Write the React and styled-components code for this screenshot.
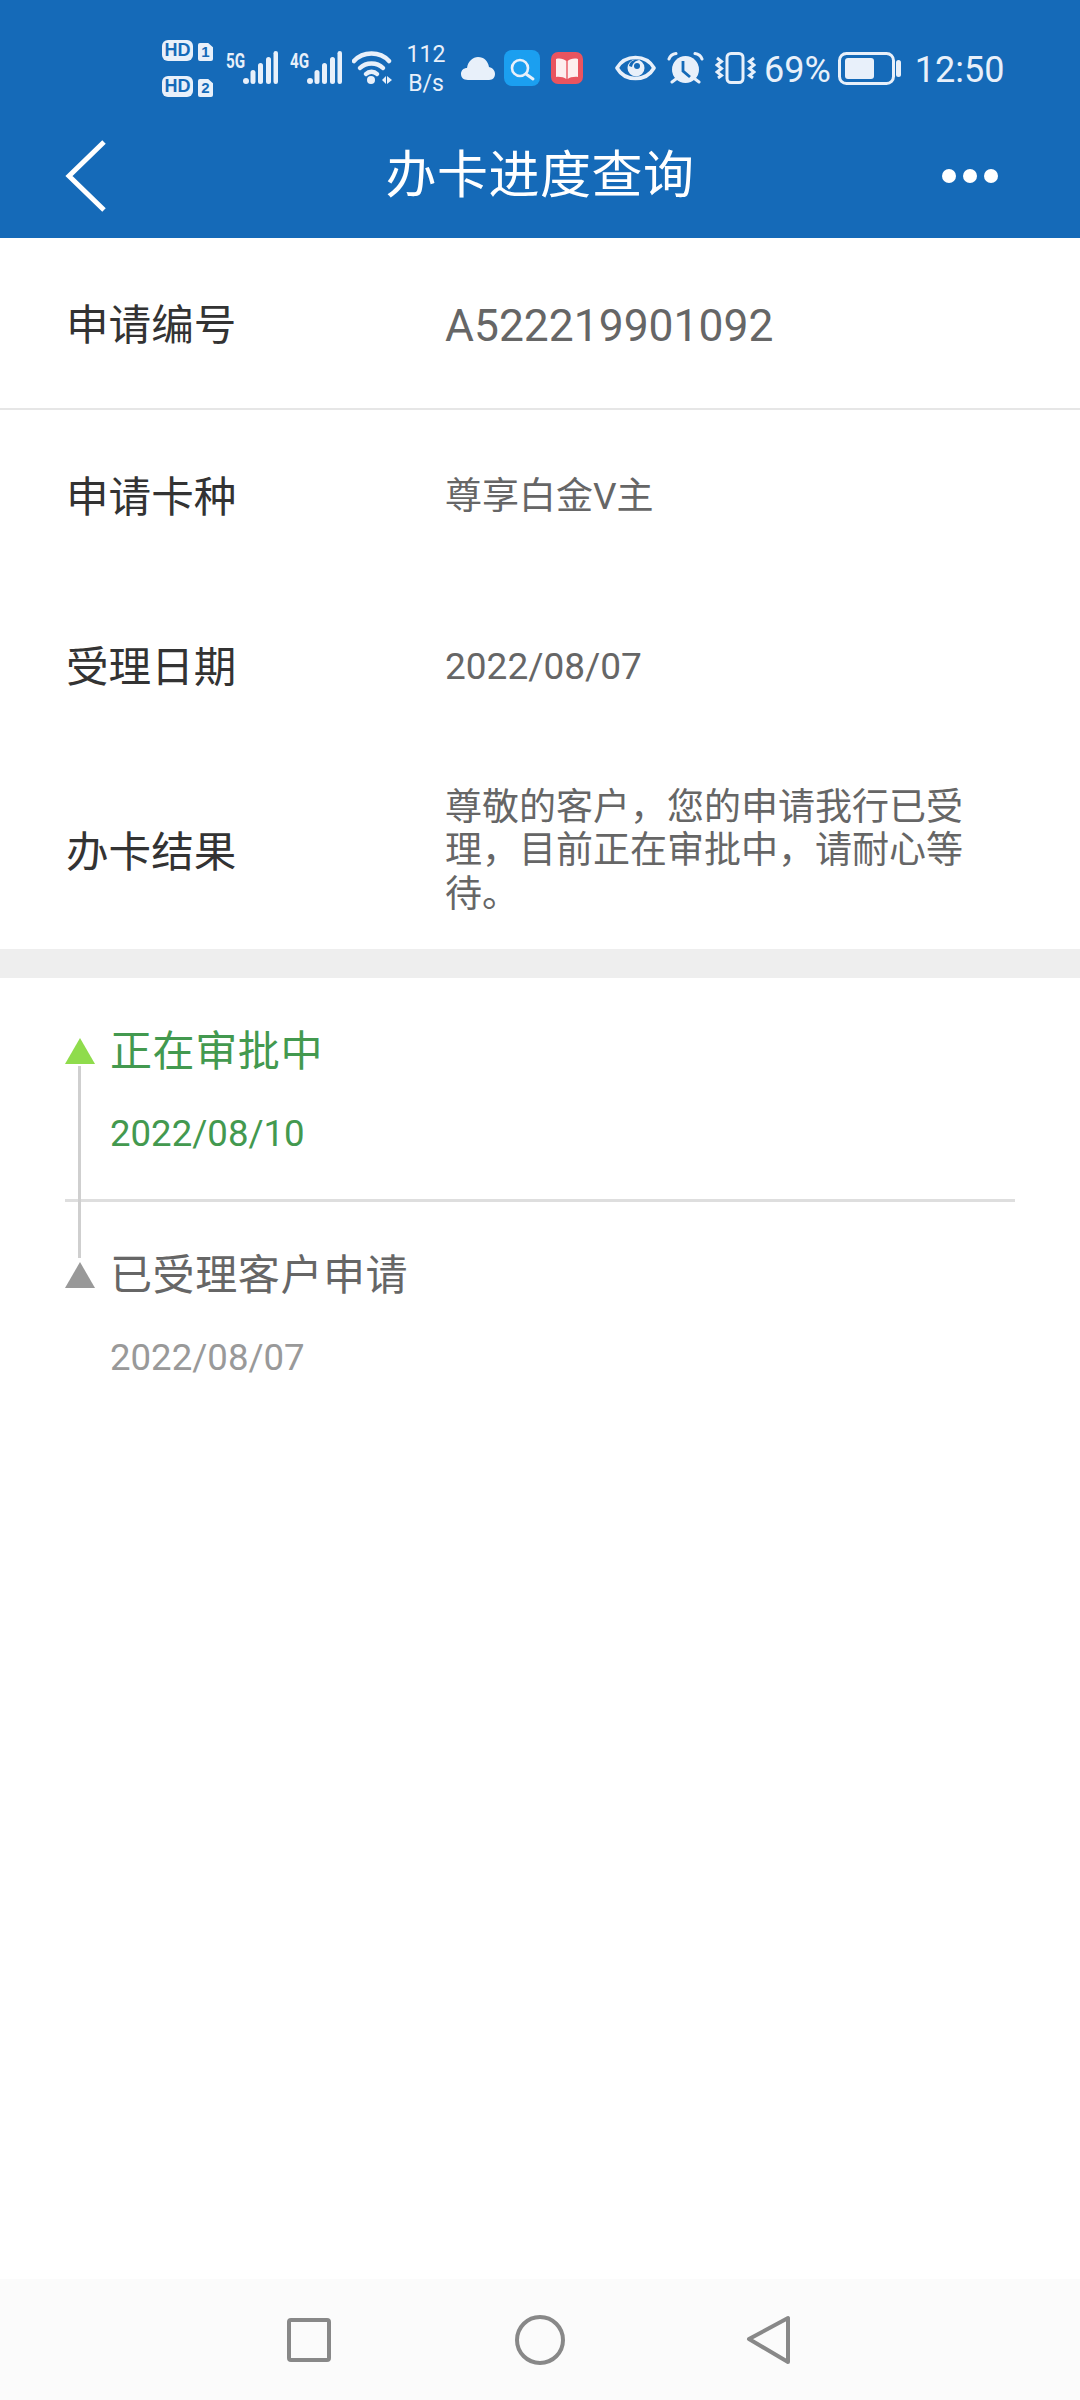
import React from "react";
import styled, { createGlobalStyle } from "styled-components";

const GlobalStyle = createGlobalStyle`
  html, body {
    margin: 0;
    padding: 0;
    background: #fff;
    font-family: Roboto, "Noto Sans CJK SC", sans-serif;
  }
`;

const Page = styled.div`
  width: 1080px;
  height: 2400px;
  display: flex;
  flex-direction: column;
  overflow: hidden;
  background: #fff;
`;

const Header = styled.header`
  height: 238px;
  background: #156ab8;
  flex-shrink: 0;
`;

const StatusBar = styled.div`
  height: 92px;
  padding: 22px 0 0 162px;
  display: flex;
  align-items: center;
  color: #e8f0fa;
`;

const Slot = styled.div`
  margin-left: ${(p) => p.$left || 0}px;
  flex-shrink: 0;
  display: flex;
  align-items: center;
`;

const SimStack = styled.div`
  display: flex;
  flex-direction: column;
  gap: 15px;
  margin-top: 1px;
`;

const SimRow = styled.div`
  display: flex;
  justify-content: space-between;
  align-items: flex-end;
  width: 51px;
`;

const HdBadge = styled.span`
  height: 21px;
  width: 31px;
  border-radius: 6px;
  background: #e8f0fa;
  color: #156ab8;
  font: 700 18px/21px "Liberation Sans", sans-serif;
  text-align: center;
`;

const SimTag = styled.span`
  height: 18px;
  width: 15px;
  border-radius: 2px;
  background: #e8f0fa;
  color: #156ab8;
  font: 700 15px/18px "Liberation Sans", sans-serif;
  text-align: center;
  clip-path: polygon(0 0, 68% 0, 100% 24%, 100% 100%, 0 100%);
`;

const Signal = styled.div`
  display: flex;
  align-items: flex-start;
  height: 34px;
`;

const NetLabel = styled.span`
  display: block;
  width: 17px;
  font: 700 20px/20px Roboto, sans-serif;
  transform: scaleX(0.76);
  transform-origin: left center;
  white-space: nowrap;
`;

const Speed = styled.div`
  width: 38px;
  padding-top: 2px;
  font-size: 23px;
  line-height: 29px;
  text-align: center;
  white-space: nowrap;
  display: flex;
  flex-direction: column;
  align-items: center;
`;

const StatusText = styled.span`
  padding-top: 4px;
  font-size: 36px;
  line-height: 40px;
  white-space: nowrap;
`;

const NavBar = styled.div`
  height: 124px;
  padding: 0 65px;
  display: grid;
  grid-template-columns: 1fr auto 1fr;
  align-items: center;
  color: #fff;
`;

const BackIcon = styled.svg`
  display: block;
  width: 42px;
  height: 72px;
`;

const Title = styled.h1`
  margin: 0;
  font-size: 51px;
  font-weight: 400;
  line-height: 60px;
  letter-spacing: 0.5px;
`;

const Dots = styled.div`
  justify-self: end;
  margin-right: 17px;
  display: flex;
  gap: 7px;
`;

const Dot = styled.span`
  width: 14px;
  height: 14px;
  border-radius: 50%;
  background: #fff;
`;

const Details = styled.section`
  display: flex;
  flex-direction: column;
`;

const Row = styled.div`
  height: ${(p) => p.$h}px;
  padding: 0 65px 0 66px;
  display: flex;
  align-items: center;
  box-sizing: border-box;
  border-bottom: ${(p) => (p.$divided ? "2px solid #e6e6e6" : "none")};
`;

const Label = styled.div`
  width: 379px;
  flex-shrink: 0;
  padding-bottom: 3px;
  font-size: 42.6px;
  color: #333;
`;

const Value = styled.div`
  width: ${(p) => (p.$wrap ? "520px" : "auto")};
  padding-top: ${(p) => (p.$large ? 8 : 3)}px;
  font-size: ${(p) => (p.$large ? 44.4 : 37)}px;
  line-height: 43.5px;
  color: #666;
`;

const Band = styled.div`
  height: 29px;
  background: #eeeeee;
  flex-shrink: 0;
`;

const Timeline = styled.section`
  position: relative;
  padding: 0 65px;
`;

const Rail = styled.div`
  position: absolute;
  left: 78px;
  top: 88px;
  width: 3px;
  height: 192px;
  background: #cfcfcf;
`;

const Step = styled.div`
  padding: 46px 0 ${(p) => (p.$divided ? 43 : 44)}px;
  border-bottom: ${(p) => (p.$divided ? "3px solid #dedede" : "none")};
`;

const StepHead = styled.div`
  display: flex;
  align-items: center;
  gap: 15px;
  height: 50px;
`;

const Marker = styled.span`
  width: 0;
  height: 0;
  margin-top: 4px;
  border-left: 15px solid transparent;
  border-right: 15px solid transparent;
  border-bottom: 26px solid ${(p) => (p.$active ? "#8fdc4c" : "#999")};
`;

const StepTitle = styled.div`
  padding-bottom: 3px;
  font-size: 42px;
  letter-spacing: 0.6px;
  color: ${(p) => (p.$active ? "#43994f" : "#666")};
`;

const StepDate = styled.div`
  margin: 38px 0 0 45px;
  font-size: 36.6px;
  line-height: 44px;
  color: ${(p) => (p.$active ? "#43994f" : "#999")};
`;

const BottomNav = styled.nav`
  margin-top: auto;
  height: 121px;
  background: #fbfbfb;
  display: flex;
  justify-content: center;
  align-items: center;
  gap: 180px;
  flex-shrink: 0;
`;

const NavIcon = styled.svg`
  display: block;
  width: 50px;
  height: 50px;
  fill: none;
  stroke: #888;
  stroke-width: 4px;
  stroke-linejoin: round;
`;

const LIGHT = "#e8f0fa";
const BLUE = "#156ab8";

const SignalBars = () => (
  <svg width="35" height="33" viewBox="0 0 35 33" style={{ display: "block" }}>
    <circle cx="3" cy="30" r="3" fill={LIGHT} />
    <rect x="7.5" y="19" width="5" height="14" rx="2.5" fill={LIGHT} />
    <rect x="15" y="12" width="5" height="21" rx="2.5" fill={LIGHT} />
    <rect x="23" y="6" width="5" height="27" rx="2.5" fill={LIGHT} />
    <rect x="30.5" y="0" width="4.5" height="33" rx="2.25" fill={LIGHT} />
  </svg>
);

const Wifi = () => (
  <svg width="40" height="34" viewBox="0 0 40 34" style={{ display: "block" }}>
    <g fill="none" stroke={LIGHT} strokeWidth="4.5" strokeLinecap="round">
      <path d="M2 10 C11 0 28 0 37 10" />
      <path d="M8 17 C14 11 25 11 31 17" />
      <path d="M14 23 C17 20 22 20 25 23" />
    </g>
    <circle cx="19" cy="29" r="4" fill={LIGHT} />
    <path d="M30 29 L34 25 V33 Z M35 25 V33 L40 29 Z" fill={LIGHT} />
  </svg>
);

const Cloud = () => (
  <svg width="34" height="23" viewBox="0 0 34 23" style={{ display: "block" }}>
    <path d="M7 23 C2 23 0 20 0 17 C0 13 3 11 6 11 C7 4 12 0 17 0 C23 0 27 4 28 10 C32 11 34 14 34 17 C34 20 32 23 28 23 Z" fill={LIGHT} />
  </svg>
);

const SearchApp = () => (
  <svg width="36" height="36" viewBox="0 0 36 36" style={{ display: "block" }}>
    <rect width="36" height="36" rx="8" fill="#1b9ff0" />
    <circle cx="16" cy="18" r="8" fill="none" stroke={LIGHT} strokeWidth="2.6" />
    <path d="M22 24 L29 29" stroke={LIGHT} strokeWidth="3" strokeLinecap="round" />
  </svg>
);

const BookApp = () => (
  <svg width="32" height="32" viewBox="0 0 32 32" style={{ display: "block" }}>
    <rect width="32" height="32" rx="7" fill="#e9545f" />
    <path d="M5 7 C9 6 13 7 15.3 9 V27 C13 25.5 9 24.5 5 25 Z M27 7 C23 6 18.5 7 16.7 9 V27 C18.5 25.5 23 24.5 27 25 Z" fill="#fdeeee" />
  </svg>
);

const Eye = () => (
  <svg width="41" height="26" viewBox="0 0 41 26" style={{ display: "block" }}>
    <path d="M2 13 C10 -1 31 -1 39 13 C31 27 10 27 2 13 Z" fill="none" stroke={LIGHT} strokeWidth="3.6" strokeLinejoin="round" />
    <circle cx="21" cy="13" r="8.5" fill={LIGHT} />
    <path d="M14 11 C15 6 19 4 24 5 C20 6 18 8 17 12 Z" fill={BLUE} />
    <circle cx="22" cy="11" r="3" fill={BLUE} />
  </svg>
);

const Alarm = () => (
  <svg width="37" height="32" viewBox="0 0 37 32" style={{ display: "block" }}>
    <circle cx="18.5" cy="17.5" r="13.5" fill={LIGHT} />
    <path d="M16 9 V19 L23 25" fill="none" stroke={BLUE} strokeWidth="2.8" />
    <g fill="none" stroke={LIGHT} strokeLinecap="round">
      <path d="M2 7 C3 4 5 2 9 1.5" strokeWidth="3" />
      <path d="M35 7 C34 4 32 2 28 1.5" strokeWidth="3" />
      <path d="M5 30 L9 27" strokeWidth="3" />
      <path d="M32 30 L28 27" strokeWidth="3" />
    </g>
  </svg>
);

const Vibrate = () => (
  <svg width="41" height="32" viewBox="0 0 41 32" style={{ display: "block" }} fill="none" stroke={LIGHT}>
    <rect x="12" y="1.5" width="16" height="29" rx="4" strokeWidth="3" />
    <path d="M2 6 L6.5 9.5 L2 13 L6.5 16.5 L2 20 L6.5 23.5 L3 26" strokeWidth="3" />
    <path d="M39 6 L34.5 9.5 L39 13 L34.5 16.5 L39 20 L34.5 23.5 L38 26" strokeWidth="3" />
  </svg>
);

const Battery = () => (
  <svg width="64" height="33" viewBox="0 0 64 33" style={{ display: "block" }}>
    <rect x="1.5" y="1.5" width="54" height="30" rx="7" fill="none" stroke={LIGHT} strokeWidth="3" />
    <rect x="7" y="6" width="29" height="21" rx="3" fill={LIGHT} />
    <rect x="58" y="8" width="5" height="17" rx="2.5" fill={LIGHT} />
  </svg>
);

const rows = [
  { label: "申请卡种", value: "尊享白金V主", h: 170 },
  { label: "受理日期", value: "2022/08/07", h: 170 },
  {
    label: "办卡结果",
    value: "尊敬的客户，您的申请我行已受理，目前正在审批中，请耐心等待。",
    h: 199,
    wrap: true,
  },
];

export default function App() {
  return (
    <Page>
      <GlobalStyle />
      <Header>
        <StatusBar>
          <SimStack>
            <SimRow>
              <HdBadge>HD</HdBadge>
              <SimTag>1</SimTag>
            </SimRow>
            <SimRow>
              <HdBadge>HD</HdBadge>
              <SimTag>2</SimTag>
            </SimRow>
          </SimStack>
          <Slot $left={13}>
            <Signal>
              <NetLabel>5G</NetLabel>
              <SignalBars />
            </Signal>
          </Slot>
          <Slot $left={12}>
            <Signal>
              <NetLabel>4G</NetLabel>
              <SignalBars />
            </Signal>
          </Slot>
          <Slot $left={10}>
            <Wifi />
          </Slot>
          <Slot $left={15}>
            <Speed>
              <span>112</span>
              <span>B/s</span>
            </Speed>
          </Slot>
          <Slot $left={16}>
            <Cloud />
          </Slot>
          <Slot $left={9}>
            <SearchApp />
          </Slot>
          <Slot $left={11}>
            <BookApp />
          </Slot>
          <Slot $left={32}>
            <Eye />
          </Slot>
          <Slot $left={11}>
            <Alarm />
          </Slot>
          <Slot $left={11}>
            <Vibrate />
          </Slot>
          <Slot $left={8}>
            <StatusText>69%</StatusText>
          </Slot>
          <Slot $left={7}>
            <Battery />
          </Slot>
          <Slot $left={13}>
            <StatusText>12:50</StatusText>
          </Slot>
        </StatusBar>
        <NavBar>
          <BackIcon viewBox="0 0 42 72">
            <path d="M39 2 L4 36 L39 70" fill="none" stroke="#fff" strokeWidth="5" />
          </BackIcon>
          <Title>办卡进度查询</Title>
          <Dots>
            <Dot />
            <Dot />
            <Dot />
          </Dots>
        </NavBar>
      </Header>

      <Details>
        <Row $h={172} $divided>
          <Label>申请编号</Label>
          <Value $large>A522219901092</Value>
        </Row>
        {rows.map((row) => (
          <Row key={row.label} $h={row.h}>
            <Label>{row.label}</Label>
            <Value $wrap={row.wrap}>{row.value}</Value>
          </Row>
        ))}
      </Details>

      <Band />

      <Timeline>
        <Rail />
        <Step $divided>
          <StepHead>
            <Marker $active />
            <StepTitle $active>正在审批中</StepTitle>
          </StepHead>
          <StepDate $active>2022/08/10</StepDate>
        </Step>
        <Step>
          <StepHead>
            <Marker />
            <StepTitle>已受理客户申请</StepTitle>
          </StepHead>
          <StepDate>2022/08/07</StepDate>
        </Step>
      </Timeline>

      <BottomNav>
        <NavIcon viewBox="0 0 50 50">
          <rect x="4" y="5" width="40" height="40" rx="2" />
        </NavIcon>
        <NavIcon viewBox="0 0 50 50">
          <circle cx="25" cy="25" r="23" />
        </NavIcon>
        <NavIcon viewBox="0 0 50 50">
          <path d="M43 3 V47 L4 24 Z" />
        </NavIcon>
      </BottomNav>
    </Page>
  );
}
